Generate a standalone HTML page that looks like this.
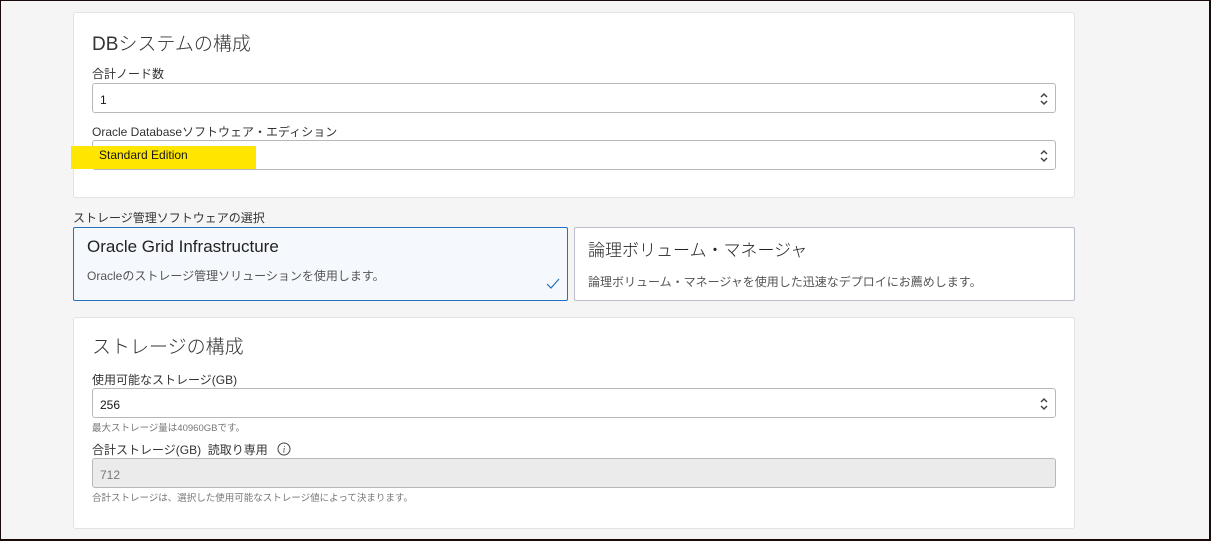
<!DOCTYPE html>
<html><head><meta charset="utf-8"><style>
*{box-sizing:border-box;margin:0;padding:0}
body{width:1211px;height:541px;background:#f5f5f5;font-family:"Liberation Sans","Noto Sans CJK JP",sans-serif;position:relative;overflow:hidden;color:#161513}
.frame{position:absolute;left:0;top:0;width:1211px;height:541px;border-left:1px solid #1a0a0a;border-top:1px solid #1a0a0a;border-right:2px solid #1a0a0a;border-bottom:2px solid #1a0a0a;z-index:10;pointer-events:none}
.card{position:absolute;background:#fff;border:1px solid #e2e2e2;border-radius:3px}
.abs{position:absolute;white-space:nowrap}
.h{font-size:19px;color:#333;font-weight:300}
.lbl{font-size:12px;color:#333}
.inp{position:absolute;left:92px;width:964px;height:30px;border:1px solid #b8b8b8;border-radius:3px;background:#fff;font-size:12px;padding:9px 0 0 7px}
.arr{position:absolute;right:6px;top:8px;width:10px;height:14px}
.help{font-size:9.5px;color:#777}
</style></head><body>
<div class="frame"></div>
<div class="card" style="left:73px;top:12px;width:1002px;height:186px"></div>
<div class="abs h" style="left:92px;top:29px">DBシステムの構成</div>
<div class="abs lbl" style="left:92px;top:65px">合計ノード数</div>
<div class="inp" style="top:83px">1<svg class="arr" viewBox="0 0 10 14"><path d="M2 5 L5 2 L8 5 M2 9 L5 12 L8 9" fill="none" stroke="#444" stroke-width="1.5"/></svg></div>
<div class="abs lbl" style="left:92px;top:123px">Oracle Databaseソフトウェア・エディション</div>
<div class="inp" style="top:140px"><svg class="arr" viewBox="0 0 10 14"><path d="M2 5 L5 2 L8 5 M2 9 L5 12 L8 9" fill="none" stroke="#444" stroke-width="1.5"/></svg></div>
<div class="abs" style="left:71px;top:146px;width:185px;height:23px;background:#ffe600"></div>
<div class="abs" style="left:99px;top:148px;font-size:12px">Standard Edition</div>
<div class="abs lbl" style="left:73px;top:209px">ストレージ管理ソフトウェアの選択</div>
<div class="card" style="left:73px;top:227px;width:495px;height:74px;background:#f5f8fc;border:1px solid #1f72c4;border-radius:2px"></div>
<div class="abs" style="left:87px;top:237px;font-size:17px;color:#222">Oracle Grid Infrastructure</div>
<div class="abs" style="left:87px;top:267px;font-size:12px;color:#555">Oracleのストレージ管理ソリューションを使用します。</div>
<svg class="abs" style="left:546px;top:278px" width="14" height="11" viewBox="0 0 14 11"><path d="M1 6 L5 10 L13 1" fill="none" stroke="#1f72c4" stroke-width="1.2"/></svg>
<div class="card" style="left:574px;top:227px;width:501px;height:74px;border:1px solid #b8bfca;border-radius:2px"></div>
<div class="abs" style="left:588px;top:236px;font-size:17px;color:#222;font-weight:300">論理ボリューム・マネージャ</div>
<div class="abs" style="left:588px;top:273px;font-size:12px;color:#555">論理ボリューム・マネージャを使用した迅速なデプロイにお薦めします。</div>
<div class="card" style="left:73px;top:317px;width:1002px;height:212px"></div>
<div class="abs h" style="left:92px;top:332px">ストレージの構成</div>
<div class="abs lbl" style="left:92px;top:371px">使用可能なストレージ(GB)</div>
<div class="inp" style="top:388px">256<svg class="arr" viewBox="0 0 10 14"><path d="M2 5 L5 2 L8 5 M2 9 L5 12 L8 9" fill="none" stroke="#444" stroke-width="1.5"/></svg></div>
<div class="abs help" style="left:92px;top:420px">最大ストレージ量は40960GBです。</div>
<div class="abs lbl" style="left:92px;top:441px">合計ストレージ(GB)&nbsp; 読取り専用</div>
<svg class="abs" style="left:277px;top:442px" width="14" height="14" viewBox="0 0 14 14"><circle cx="7" cy="7" r="6" fill="none" stroke="#444" stroke-width="1"/><text x="7" y="10.5" font-size="9" font-style="italic" text-anchor="middle" fill="#444" font-family="Liberation Serif">i</text></svg>
<div class="inp" style="top:458px;background:#ebebeb;color:#777">712</div>
<div class="abs help" style="left:92px;top:490px">合計ストレージは、選択した使用可能なストレージ値によって決まります。</div>
</body></html>
